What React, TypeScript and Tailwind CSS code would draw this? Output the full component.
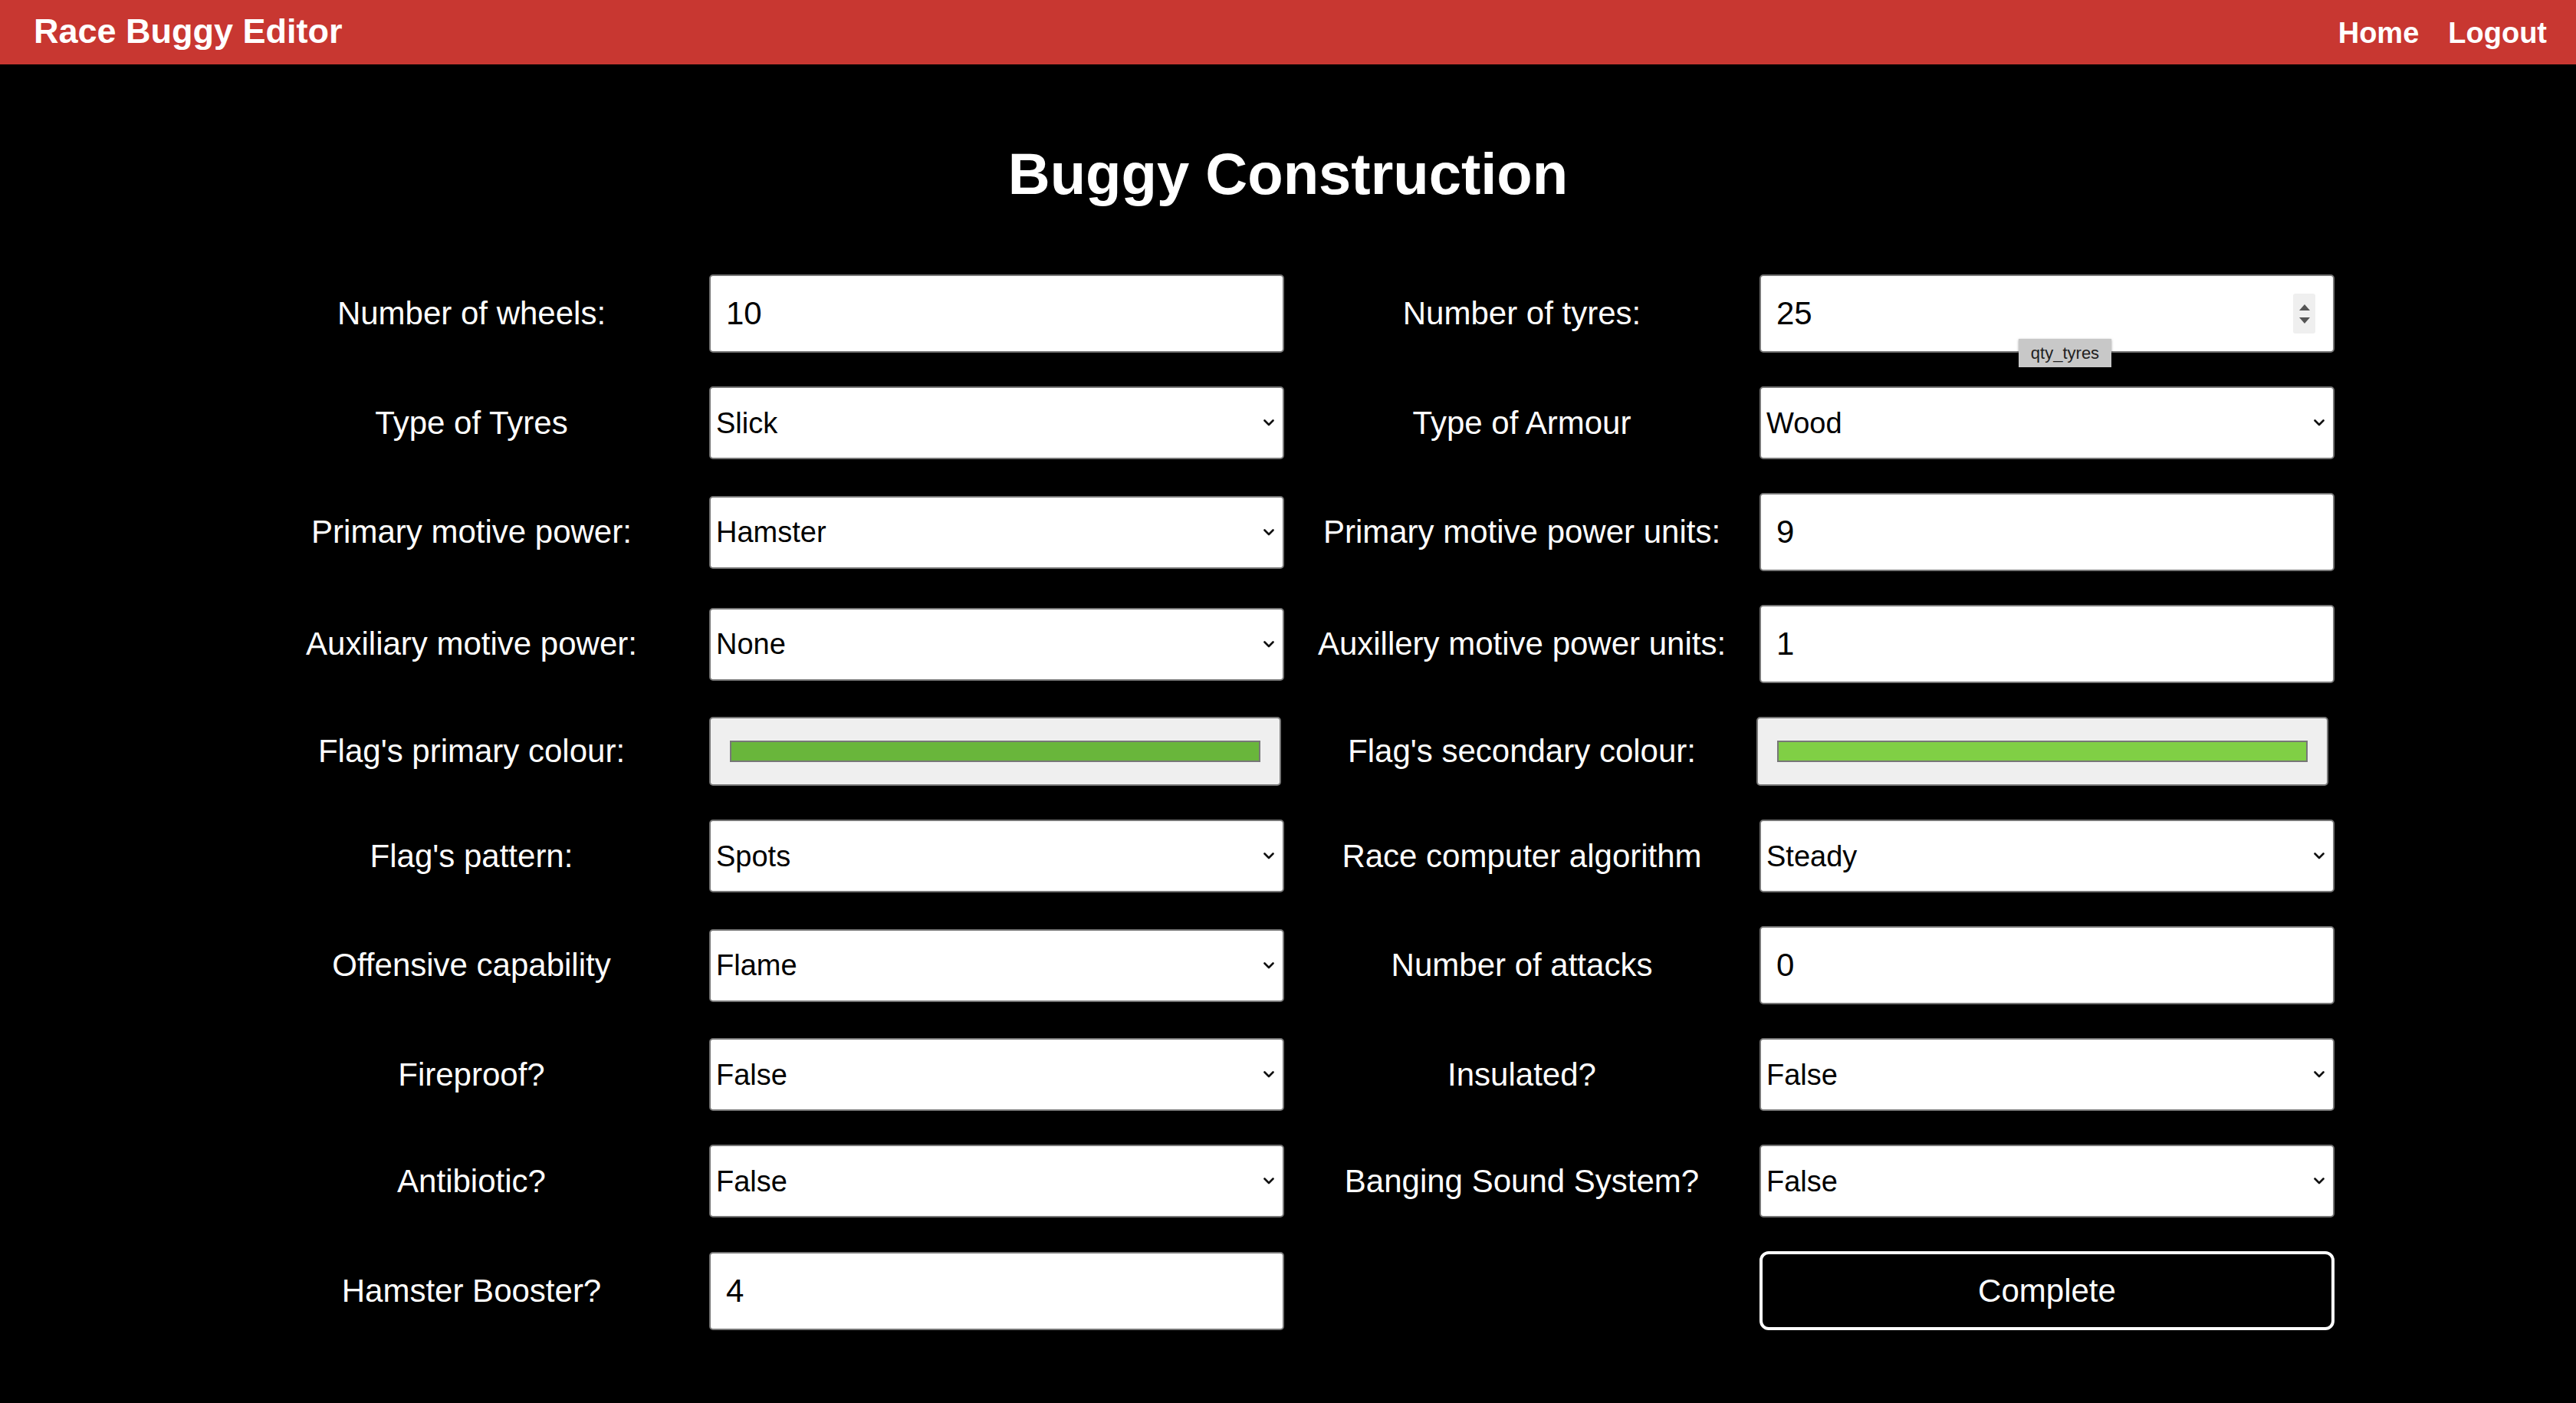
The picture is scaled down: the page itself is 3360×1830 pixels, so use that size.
import React from 'react';

type Field =
  | { kind: 'text'; value: string }
  | { kind: 'number'; value: string; tooltip: string }
  | { kind: 'select'; value: string }
  | { kind: 'color'; value: string; shift?: boolean }
  | { kind: 'button'; value: string };

interface Row {
  left: [string, Field];
  right: [string, Field] | [null, Field];
}

const ROWS: Row[] = [
  {
    left: ['Number of wheels:', { kind: 'text', value: '10' }],
    right: ['Number of tyres:', { kind: 'number', value: '25', tooltip: 'qty_tyres' }],
  },
  {
    left: ['Type of Tyres', { kind: 'select', value: 'Slick' }],
    right: ['Type of Armour', { kind: 'select', value: 'Wood' }],
  },
  {
    left: ['Primary motive power:', { kind: 'select', value: 'Hamster' }],
    right: ['Primary motive power units:', { kind: 'text', value: '9' }],
  },
  {
    left: ['Auxiliary motive power:', { kind: 'select', value: 'None' }],
    right: ['Auxillery motive power units:', { kind: 'text', value: '1' }],
  },
  {
    left: ["Flag's primary colour:", { kind: 'color', value: '#69b63b' }],
    right: ["Flag's secondary colour:", { kind: 'color', value: '#80cf45', shift: true }],
  },
  {
    left: ["Flag's pattern:", { kind: 'select', value: 'Spots' }],
    right: ['Race computer algorithm', { kind: 'select', value: 'Steady' }],
  },
  {
    left: ['Offensive capability', { kind: 'select', value: 'Flame' }],
    right: ['Number of attacks', { kind: 'text', value: '0' }],
  },
  {
    left: ['Fireproof?', { kind: 'select', value: 'False' }],
    right: ['Insulated?', { kind: 'select', value: 'False' }],
  },
  {
    left: ['Antibiotic?', { kind: 'select', value: 'False' }],
    right: ['Banging Sound System?', { kind: 'select', value: 'False' }],
  },
  {
    left: ['Hamster Booster?', { kind: 'text', value: '4' }],
    right: [null, { kind: 'button', value: 'Complete' }],
  },
];

const Chevron = () => (
  <svg width="14" height="9" viewBox="0 0 14 9" className="shrink-0">
    <path d="M1.5 1.5 L7 7 L12.5 1.5" fill="none" stroke="#111" strokeWidth="2.6" strokeLinecap="round" strokeLinejoin="round" />
  </svg>
);

const Spinner = () => (
  <div className="flex flex-col items-center justify-center gap-[9px] w-[29px] h-[52px] bg-[#efefef] rounded-[3px]">
    <svg width="14" height="8" viewBox="0 0 14 8">
      <path d="M7 0 L14 8 L0 8 Z" fill="#555" />
    </svg>
    <svg width="14" height="8" viewBox="0 0 14 8">
      <path d="M0 0 L14 0 L7 8 Z" fill="#555" />
    </svg>
  </div>
);

const Control = ({ field }: { field: Field }) => {
  switch (field.kind) {
    case 'text':
      return (
        <div className="h-[102px] w-[750px] bg-white border-2 border-[#767676] rounded-[5px] flex items-center px-[20px] text-black text-[42px] leading-none">
          {field.value}
        </div>
      );
    case 'number':
      return (
        <div className="relative h-[102px] w-[750px] bg-white border-2 border-[#767676] rounded-[5px] flex items-center justify-between pl-[20px] pr-[23px] text-black text-[42px] leading-none">
          <span>{field.value}</span>
          <Spinner />
          <div className="absolute left-[336px] top-[82px] w-[121px] h-[37px] bg-[#c8c8c8] shadow-[0_1px_3px_rgba(0,0,0,0.35)] flex items-center justify-center text-[22px] text-[#222] leading-none">
            {field.tooltip}
          </div>
        </div>
      );
    case 'select':
      return (
        <div className="h-[95px] w-[750px] bg-white border-2 border-[#767676] rounded-[5px] flex items-center justify-between pl-[7px] pr-[11px] text-black text-[38px] leading-none">
          <span>{field.value}</span>
          <Chevron />
        </div>
      );
    case 'color':
      return (
        <div
          className={`h-[90px] w-[746px] bg-[#efefef] border-2 border-[#767676] rounded-[5px] flex items-center px-[25px] ${
            field.shift ? '-ml-[4px]' : ''
          }`}
        >
          <div className="w-full h-[28px] border-2 border-[#777]" style={{ backgroundColor: field.value }} />
        </div>
      );
    case 'button':
      return (
        <div className="h-[103px] w-[750px] bg-black border-4 border-white rounded-[12px] flex items-center justify-center text-white text-[42px] leading-none">
          {field.value}
        </div>
      );
  }
};

const Label = ({ text }: { text: string | null }) => (
  <div className="text-center text-white text-[42px] leading-none">{text}</div>
);

export default function App() {
  return (
    <div className="min-h-screen bg-black font-['Liberation_Sans',Arial,sans-serif]">
      <header className="h-[84px] bg-[#c83731] flex items-baseline justify-between pt-[18px] pl-[44px] pr-[38px] text-white font-bold">
        <span className="text-[45px] leading-none">Race Buggy Editor</span>
        <nav className="flex items-baseline gap-[38px] text-[38px] leading-none">
          <a>Home</a>
          <a>Logout</a>
        </nav>
      </header>

      <h1 className="mt-[105px] text-center text-white text-[76px] font-bold leading-none">Buggy Construction</h1>

      <div className="mt-[93px] mx-auto w-[2730px] pl-[10px] flex flex-col gap-[44px] pb-[95px]">
        {ROWS.map((row, i) => (
          <div key={i} className="grid grid-cols-[580px_750px_580px_750px] gap-x-5 items-center">
            <Label text={row.left[0]} />
            <Control field={row.left[1]} />
            <Label text={row.right[0]} />
            <Control field={row.right[1]} />
          </div>
        ))}
      </div>
    </div>
  );
}
